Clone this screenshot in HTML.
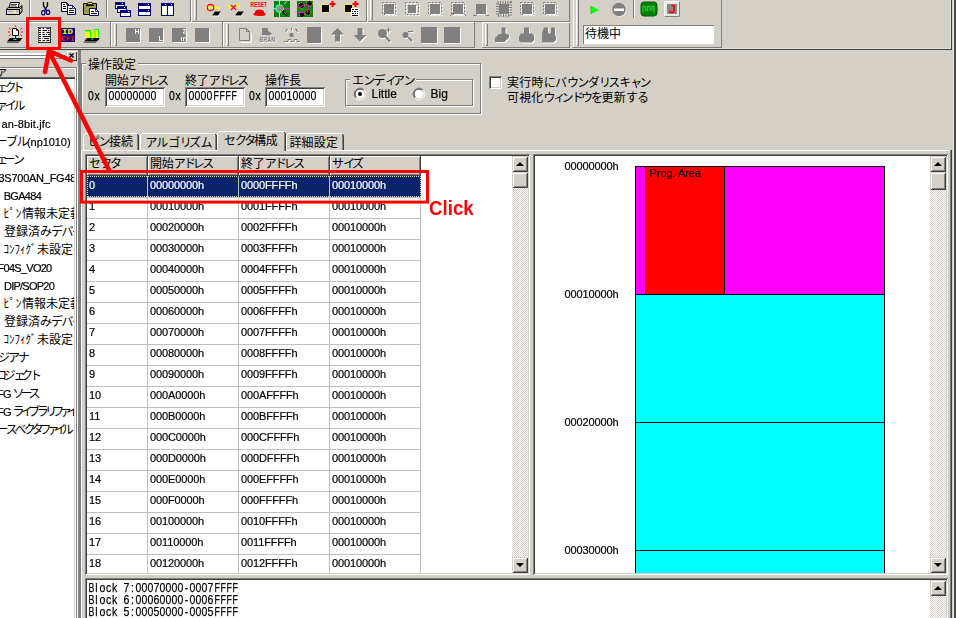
<!DOCTYPE html>
<html><head><meta charset="utf-8"><title>Sector configuration</title>
<style>
html,body{margin:0;padding:0}
body{width:956px;height:618px;overflow:hidden;background:#d4d0c8;position:relative;font-family:"Liberation Sans",sans-serif}
.a{position:absolute;box-sizing:border-box}
svg{position:absolute;left:0;top:0}
.t{line-height:1;white-space:pre;filter:grayscale(1);-webkit-text-stroke:0.2px}
.s{font-family:"Liberation Sans",sans-serif}
  .mo span{display:inline-block;width:6px;text-align:center}
.mo .w{transform:scaleX(.84)}
.m{font-family:"Liberation Mono",monospace}
.j{font-family:"Liberation Sans","Noto Sans CJK JP",sans-serif;font-size:12px;fill:#000}
</style></head><body>
<div class="a " style="left:0px;top:48px;width:951px;height:1px;background:#e4e1da;"></div>
<div class="a " style="left:950px;top:0px;width:1px;height:49px;background:#e4e1da;"></div>
<div class="a " style="left:0px;top:49px;width:952px;height:1px;background:#404040;"></div>
<div class="a " style="left:951px;top:0px;width:1px;height:50px;background:#404040;"></div>
<div class="a " style="left:953px;top:0px;width:1px;height:618px;background:#ebe8e1;"></div>
<div class="a " style="left:954px;top:0px;width:2px;height:618px;background:#4a4a4a;"></div>
<div class="a " style="left:0px;top:21px;width:570px;height:1px;background:#808080;"></div>
<div class="a " style="left:190px;top:0px;width:1px;height:22px;background:#808080;"></div>
<div class="a " style="left:191px;top:0px;width:1px;height:22px;background:#fff;"></div>
<div class="a " style="left:194px;top:0px;width:1px;height:20px;background:#fff;"></div>
<div class="a " style="left:196px;top:0px;width:1px;height:20px;background:#808080;"></div>
<div class="a " style="left:195px;top:19px;width:1px;height:1px;background:#808080;"></div>
<div class="a " style="left:366px;top:0px;width:1px;height:22px;background:#808080;"></div>
<div class="a " style="left:367px;top:0px;width:1px;height:22px;background:#fff;"></div>
<div class="a " style="left:370px;top:0px;width:1px;height:20px;background:#fff;"></div>
<div class="a " style="left:372px;top:0px;width:1px;height:20px;background:#808080;"></div>
<div class="a " style="left:371px;top:19px;width:1px;height:1px;background:#808080;"></div>
<div class="a " style="left:569px;top:0px;width:1px;height:48px;background:#808080;"></div>
<div class="a " style="left:29px;top:0px;width:1px;height:18px;background:#808080;"></div>
<div class="a " style="left:30px;top:0px;width:1px;height:18px;background:#fff;"></div>
<div class="a " style="left:106px;top:0px;width:1px;height:18px;background:#808080;"></div>
<div class="a " style="left:107px;top:0px;width:1px;height:18px;background:#fff;"></div>
<div class="a " style="left:0px;top:22px;width:570px;height:1px;background:#fff;"></div>
<div class="a " style="left:0px;top:47px;width:570px;height:1px;background:#808080;"></div>
<div class="a " style="left:110px;top:22px;width:1px;height:26px;background:#808080;"></div>
<div class="a " style="left:111px;top:23px;width:1px;height:24px;background:#fff;"></div>
<div class="a " style="left:114px;top:24px;width:1px;height:22px;background:#fff;"></div>
<div class="a " style="left:116px;top:24px;width:1px;height:22px;background:#808080;"></div>
<div class="a " style="left:115px;top:45px;width:1px;height:1px;background:#808080;"></div>
<div class="a " style="left:222px;top:22px;width:1px;height:26px;background:#808080;"></div>
<div class="a " style="left:223px;top:23px;width:1px;height:24px;background:#fff;"></div>
<div class="a " style="left:226px;top:24px;width:1px;height:22px;background:#fff;"></div>
<div class="a " style="left:228px;top:24px;width:1px;height:22px;background:#808080;"></div>
<div class="a " style="left:227px;top:45px;width:1px;height:1px;background:#808080;"></div>
<div class="a " style="left:474px;top:22px;width:1px;height:26px;background:#808080;"></div>
<div class="a " style="left:475px;top:22px;width:7px;height:26px;background:#d4d0c8;"></div>
<div class="a " style="left:475px;top:47px;width:7px;height:1px;background:#d4d0c8;"></div>
<div class="a " style="left:482px;top:22px;width:1px;height:25px;background:#fff;"></div>
<div class="a " style="left:485px;top:24px;width:1px;height:22px;background:#fff;"></div>
<div class="a " style="left:487px;top:24px;width:1px;height:22px;background:#808080;"></div>
<div class="a " style="left:486px;top:45px;width:1px;height:1px;background:#808080;"></div>
<div class="a " style="left:30px;top:26px;width:1px;height:18px;background:#fff;"></div>
<div class="a " style="left:570px;top:0px;width:3px;height:48px;background:#d4d0c8;"></div>
<div class="a " style="left:573px;top:0px;width:1px;height:48px;background:#fff;"></div>
<div class="a " style="left:576px;top:0px;width:1px;height:46px;background:#fff;"></div>
<div class="a " style="left:578px;top:0px;width:1px;height:46px;background:#808080;"></div>
<div class="a " style="left:577px;top:45px;width:1px;height:1px;background:#808080;"></div>
<div class="a " style="left:721px;top:0px;width:1px;height:48px;background:#808080;"></div>
<div class="a " style="left:573px;top:47px;width:149px;height:1px;background:#808080;"></div>
<div class="a " style="left:633px;top:0px;width:1px;height:18px;background:#808080;"></div>
<div class="a " style="left:634px;top:0px;width:1px;height:18px;background:#fff;"></div>
<div class="a " style="left:583px;top:25px;width:131px;height:19px;background:#fff;box-shadow:inset 1px 1px 0 #808080,inset -1px -1px 0 #fff;"></div>
<div class="a " style="left:0px;top:53px;width:65px;height:1px;background:#fff;"></div>
<div class="a " style="left:0px;top:54px;width:65px;height:1px;background:#fff;"></div>
<div class="a " style="left:0px;top:55px;width:65px;height:1px;background:#808080;"></div>
<div class="a " style="left:0px;top:56px;width:65px;height:1px;background:#fff;"></div>
<div class="a " style="left:0px;top:57px;width:65px;height:1px;background:#fff;"></div>
<div class="a " style="left:0px;top:58px;width:65px;height:1px;background:#808080;"></div>
<div class="a " style="left:67px;top:51px;width:10px;height:10px;background:#d4d0c8;box-shadow:inset 1px 1px 0 #fff,inset -1px -1px 0 #404040;"></div>
<div class="a " style="left:0px;top:67px;width:77px;height:1px;background:#808080;"></div>
<div class="a " style="left:0px;top:68px;width:76px;height:11px;background:#d4d0c8;"></div>
<div class="a " style="left:0px;top:68px;width:76px;height:1px;background:#fff;"></div>
<div class="a " style="left:0px;top:77px;width:75px;height:1px;background:#606060;"></div>
<div class="a " style="left:0px;top:78px;width:75px;height:1px;background:#404040;"></div>
<div class="a " style="left:0px;top:79px;width:74px;height:539px;background:#fff;"></div>
<div class="a " style="left:74px;top:79px;width:1px;height:539px;background:#d4d0c8;"></div>
<div class="a " style="left:75px;top:69px;width:1px;height:549px;background:#fff;"></div>
<div class="a " style="left:76px;top:67px;width:1px;height:551px;background:#808080;"></div>
<div class="a " style="left:77px;top:67px;width:1px;height:551px;background:#fff;"></div>
<div class="a " style="left:78px;top:50px;width:3px;height:568px;background:#808080;"></div>
<div class="a " style="left:81px;top:150px;width:1px;height:468px;background:#fff;"></div>
<div class="a" style="left:0;top:0;width:74px;height:618px;overflow:hidden"><div class="a t s" style="left:1.5px;top:119px;font-size:11px;color:#000;letter-spacing:0.119px;">an-8bit.jfc</div><div class="a t s" style="left:27px;top:137px;font-size:11px;color:#000;letter-spacing:-0.067px;">(np1010)</div><div class="a t s" style="left:-1.5px;top:173px;font-size:11px;color:#000;letter-spacing:-0.256px;">3S700AN_FG484</div><div class="a t s" style="left:3.7px;top:191px;font-size:11px;color:#000;letter-spacing:-0.681px;">BGA484</div><div class="a t s" style="left:-2.5px;top:263px;font-size:11px;color:#000;letter-spacing:-0.726px;">F04S_VO20</div><div class="a t s" style="left:4px;top:281px;font-size:11px;color:#000;letter-spacing:-0.762px;">DIP/SOP20</div><div class="a t s" style="left:-3px;top:389px;font-size:11px;color:#000;letter-spacing:-0.638px;">FG</div><div class="a t s" style="left:-3px;top:407px;font-size:11px;color:#000;letter-spacing:-0.638px;">FG</div></div>
<div class="a " style="left:82px;top:64px;width:400px;height:51px;border:1px solid #fff;box-sizing:border-box;"></div>
<div class="a " style="left:81px;top:63px;width:400px;height:51px;border:1px solid #808080;box-sizing:border-box;"></div>
<div class="a " style="left:86px;top:58px;width:52px;height:12px;background:#d4d0c8;"></div>
<div class="a " style="left:105px;top:87px;width:60px;height:20px;background:#fff;box-shadow:inset 1px 1px 0 #808080,inset -1px -1px 0 #fff,inset 2px 2px 0 #404040,inset -2px -2px 0 #d4d0c8;"></div>
<div class="a t s mo" style="left:108.5px;top:88.6px;font-size:10.5px;color:#000;transform:scaleY(1.25);transform-origin:0 0;"><span>0</span><span>0</span><span>0</span><span>0</span><span>0</span><span>0</span><span>0</span><span>0</span></div>
<div class="a " style="left:185px;top:87px;width:60px;height:20px;background:#fff;box-shadow:inset 1px 1px 0 #808080,inset -1px -1px 0 #fff,inset 2px 2px 0 #404040,inset -2px -2px 0 #d4d0c8;"></div>
<div class="a t s mo" style="left:188.5px;top:88.6px;font-size:10.5px;color:#000;transform:scaleY(1.25);transform-origin:0 0;"><span>0</span><span>0</span><span>0</span><span>0</span><span class="w">F</span><span class="w">F</span><span class="w">F</span><span class="w">F</span></div>
<div class="a " style="left:265px;top:87px;width:60px;height:20px;background:#fff;box-shadow:inset 1px 1px 0 #808080,inset -1px -1px 0 #fff,inset 2px 2px 0 #404040,inset -2px -2px 0 #d4d0c8;"></div>
<div class="a t s mo" style="left:268.5px;top:88.6px;font-size:10.5px;color:#000;transform:scaleY(1.25);transform-origin:0 0;"><span>0</span><span>0</span><span>0</span><span>1</span><span>0</span><span>0</span><span>0</span><span>0</span></div>
<div class="a t s mo" style="left:88px;top:88.6px;font-size:10.5px;color:#000;transform:scaleY(1.25);transform-origin:0 0;"><span>0</span><span>x</span></div>
<div class="a t s mo" style="left:169px;top:88.6px;font-size:10.5px;color:#000;transform:scaleY(1.25);transform-origin:0 0;"><span>0</span><span>x</span></div>
<div class="a t s mo" style="left:249px;top:88.6px;font-size:10.5px;color:#000;transform:scaleY(1.25);transform-origin:0 0;"><span>0</span><span>x</span></div>
<div class="a " style="left:346px;top:80px;width:128px;height:27px;border:1px solid #fff;box-sizing:border-box;"></div>
<div class="a " style="left:345px;top:79px;width:128px;height:27px;border:1px solid #808080;box-sizing:border-box;"></div>
<div class="a " style="left:350px;top:74px;width:66px;height:12px;background:#d4d0c8;"></div>
<div class="a t s" style="left:371.5px;top:87.5px;font-size:12px;color:#000;">Little</div>
<div class="a t s" style="left:430.5px;top:87.5px;font-size:12px;color:#000;">Big</div>
<div class="a " style="left:489px;top:76px;width:13px;height:13px;background:#fff;box-shadow:inset 1px 1px 0 #808080,inset -1px -1px 0 #fff,inset 2px 2px 0 #404040,inset -2px -2px 0 #d4d0c8;"></div>
<div class="a " style="left:81px;top:150px;width:870px;height:1px;background:#fff;"></div>
<div class="a " style="left:950px;top:150px;width:1px;height:468px;background:#808080;"></div>
<div class="a " style="left:951px;top:150px;width:1px;height:468px;background:#404040;"></div>
<div class="a " style="left:83px;top:135px;width:1px;height:15px;background:#fff;"></div>
<div class="a " style="left:85px;top:133px;width:52px;height:1px;background:#fff;"></div>
<div class="a " style="left:84px;top:134px;width:1px;height:1px;background:#fff;"></div>
<div class="a " style="left:138px;top:135px;width:1px;height:15px;background:#404040;"></div>
<div class="a " style="left:137px;top:134px;width:1px;height:16px;background:#808080;"></div>
<div class="a " style="left:137px;top:134px;width:1px;height:1px;background:#404040;"></div>
<div class="a " style="left:140px;top:135px;width:1px;height:15px;background:#fff;"></div>
<div class="a " style="left:142px;top:133px;width:73px;height:1px;background:#fff;"></div>
<div class="a " style="left:141px;top:134px;width:1px;height:1px;background:#fff;"></div>
<div class="a " style="left:216px;top:135px;width:1px;height:15px;background:#404040;"></div>
<div class="a " style="left:215px;top:134px;width:1px;height:16px;background:#808080;"></div>
<div class="a " style="left:215px;top:134px;width:1px;height:1px;background:#404040;"></div>
<div class="a " style="left:286px;top:135px;width:1px;height:15px;background:#fff;"></div>
<div class="a " style="left:288px;top:133px;width:54px;height:1px;background:#fff;"></div>
<div class="a " style="left:287px;top:134px;width:1px;height:1px;background:#fff;"></div>
<div class="a " style="left:343px;top:135px;width:1px;height:15px;background:#404040;"></div>
<div class="a " style="left:342px;top:134px;width:1px;height:16px;background:#808080;"></div>
<div class="a " style="left:342px;top:134px;width:1px;height:1px;background:#404040;"></div>
<div class="a " style="left:217px;top:131px;width:69px;height:20px;background:#d4d0c8;"></div>
<div class="a " style="left:217px;top:133px;width:1px;height:18px;background:#fff;"></div>
<div class="a " style="left:219px;top:131px;width:65px;height:1px;background:#fff;"></div>
<div class="a " style="left:218px;top:132px;width:1px;height:1px;background:#fff;"></div>
<div class="a " style="left:285px;top:133px;width:1px;height:18px;background:#404040;"></div>
<div class="a " style="left:284px;top:132px;width:1px;height:19px;background:#808080;"></div>
<div class="a " style="left:284px;top:132px;width:1px;height:1px;background:#404040;"></div>
<div class="a " style="left:85px;top:154px;width:445px;height:421px;background:#fff;box-shadow:inset 1px 1px 0 #808080,inset -1px -1px 0 #fff,inset 2px 2px 0 #404040,inset -2px -2px 0 #d4d0c8;"></div>
<div class="a " style="left:87px;top:156px;width:334px;height:20px;background:#d4d0c8;"></div>
<div class="a " style="left:87px;top:156px;width:334px;height:1px;background:#fff;"></div>
<div class="a " style="left:87px;top:174px;width:334px;height:1px;background:#808080;"></div>
<div class="a " style="left:87px;top:175px;width:334px;height:1px;background:#404040;"></div>
<div class="a " style="left:87px;top:156px;width:1px;height:19px;background:#fff;"></div>
<div class="a " style="left:147px;top:156px;width:1px;height:20px;background:#404040;"></div>
<div class="a " style="left:146px;top:157px;width:1px;height:18px;background:#808080;"></div>
<div class="a " style="left:148px;top:156px;width:1px;height:19px;background:#fff;"></div>
<div class="a " style="left:238px;top:156px;width:1px;height:20px;background:#404040;"></div>
<div class="a " style="left:237px;top:157px;width:1px;height:18px;background:#808080;"></div>
<div class="a " style="left:239px;top:156px;width:1px;height:19px;background:#fff;"></div>
<div class="a " style="left:329px;top:156px;width:1px;height:20px;background:#404040;"></div>
<div class="a " style="left:328px;top:157px;width:1px;height:18px;background:#808080;"></div>
<div class="a " style="left:330px;top:156px;width:1px;height:19px;background:#fff;"></div>
<div class="a " style="left:420px;top:156px;width:1px;height:20px;background:#404040;"></div>
<div class="a " style="left:419px;top:157px;width:1px;height:18px;background:#808080;"></div>
<div class="a " style="left:87px;top:176px;width:334px;height:21px;background:#0a246a;outline:1px dotted #e8d8a0;outline-offset:-1px;"></div>
<div class="a " style="left:87px;top:197px;width:334px;height:1px;background:#c0c0c0;"></div>
<div class="a t s" style="left:89px;top:180px;font-size:11px;color:#fff;letter-spacing:-0.12px;">0</div>
<div class="a t s" style="left:150px;top:180px;font-size:11px;color:#fff;letter-spacing:-0.12px;">00000000h</div>
<div class="a t s" style="left:241px;top:180px;font-size:11px;color:#fff;letter-spacing:-0.12px;">0000FFFFh</div>
<div class="a t s" style="left:332px;top:180px;font-size:11px;color:#fff;letter-spacing:-0.12px;">00010000h</div>
<div class="a " style="left:87px;top:218px;width:334px;height:1px;background:#c0c0c0;"></div>
<div class="a t s" style="left:89px;top:201px;font-size:11px;color:#000;letter-spacing:-0.12px;">1</div>
<div class="a t s" style="left:150px;top:201px;font-size:11px;color:#000;letter-spacing:-0.12px;">00010000h</div>
<div class="a t s" style="left:241px;top:201px;font-size:11px;color:#000;letter-spacing:-0.12px;">0001FFFFh</div>
<div class="a t s" style="left:332px;top:201px;font-size:11px;color:#000;letter-spacing:-0.12px;">00010000h</div>
<div class="a " style="left:87px;top:239px;width:334px;height:1px;background:#c0c0c0;"></div>
<div class="a t s" style="left:89px;top:222px;font-size:11px;color:#000;letter-spacing:-0.12px;">2</div>
<div class="a t s" style="left:150px;top:222px;font-size:11px;color:#000;letter-spacing:-0.12px;">00020000h</div>
<div class="a t s" style="left:241px;top:222px;font-size:11px;color:#000;letter-spacing:-0.12px;">0002FFFFh</div>
<div class="a t s" style="left:332px;top:222px;font-size:11px;color:#000;letter-spacing:-0.12px;">00010000h</div>
<div class="a " style="left:87px;top:260px;width:334px;height:1px;background:#c0c0c0;"></div>
<div class="a t s" style="left:89px;top:243px;font-size:11px;color:#000;letter-spacing:-0.12px;">3</div>
<div class="a t s" style="left:150px;top:243px;font-size:11px;color:#000;letter-spacing:-0.12px;">00030000h</div>
<div class="a t s" style="left:241px;top:243px;font-size:11px;color:#000;letter-spacing:-0.12px;">0003FFFFh</div>
<div class="a t s" style="left:332px;top:243px;font-size:11px;color:#000;letter-spacing:-0.12px;">00010000h</div>
<div class="a " style="left:87px;top:281px;width:334px;height:1px;background:#c0c0c0;"></div>
<div class="a t s" style="left:89px;top:264px;font-size:11px;color:#000;letter-spacing:-0.12px;">4</div>
<div class="a t s" style="left:150px;top:264px;font-size:11px;color:#000;letter-spacing:-0.12px;">00040000h</div>
<div class="a t s" style="left:241px;top:264px;font-size:11px;color:#000;letter-spacing:-0.12px;">0004FFFFh</div>
<div class="a t s" style="left:332px;top:264px;font-size:11px;color:#000;letter-spacing:-0.12px;">00010000h</div>
<div class="a " style="left:87px;top:302px;width:334px;height:1px;background:#c0c0c0;"></div>
<div class="a t s" style="left:89px;top:285px;font-size:11px;color:#000;letter-spacing:-0.12px;">5</div>
<div class="a t s" style="left:150px;top:285px;font-size:11px;color:#000;letter-spacing:-0.12px;">00050000h</div>
<div class="a t s" style="left:241px;top:285px;font-size:11px;color:#000;letter-spacing:-0.12px;">0005FFFFh</div>
<div class="a t s" style="left:332px;top:285px;font-size:11px;color:#000;letter-spacing:-0.12px;">00010000h</div>
<div class="a " style="left:87px;top:323px;width:334px;height:1px;background:#c0c0c0;"></div>
<div class="a t s" style="left:89px;top:306px;font-size:11px;color:#000;letter-spacing:-0.12px;">6</div>
<div class="a t s" style="left:150px;top:306px;font-size:11px;color:#000;letter-spacing:-0.12px;">00060000h</div>
<div class="a t s" style="left:241px;top:306px;font-size:11px;color:#000;letter-spacing:-0.12px;">0006FFFFh</div>
<div class="a t s" style="left:332px;top:306px;font-size:11px;color:#000;letter-spacing:-0.12px;">00010000h</div>
<div class="a " style="left:87px;top:344px;width:334px;height:1px;background:#c0c0c0;"></div>
<div class="a t s" style="left:89px;top:327px;font-size:11px;color:#000;letter-spacing:-0.12px;">7</div>
<div class="a t s" style="left:150px;top:327px;font-size:11px;color:#000;letter-spacing:-0.12px;">00070000h</div>
<div class="a t s" style="left:241px;top:327px;font-size:11px;color:#000;letter-spacing:-0.12px;">0007FFFFh</div>
<div class="a t s" style="left:332px;top:327px;font-size:11px;color:#000;letter-spacing:-0.12px;">00010000h</div>
<div class="a " style="left:87px;top:365px;width:334px;height:1px;background:#c0c0c0;"></div>
<div class="a t s" style="left:89px;top:348px;font-size:11px;color:#000;letter-spacing:-0.12px;">8</div>
<div class="a t s" style="left:150px;top:348px;font-size:11px;color:#000;letter-spacing:-0.12px;">00080000h</div>
<div class="a t s" style="left:241px;top:348px;font-size:11px;color:#000;letter-spacing:-0.12px;">0008FFFFh</div>
<div class="a t s" style="left:332px;top:348px;font-size:11px;color:#000;letter-spacing:-0.12px;">00010000h</div>
<div class="a " style="left:87px;top:386px;width:334px;height:1px;background:#c0c0c0;"></div>
<div class="a t s" style="left:89px;top:369px;font-size:11px;color:#000;letter-spacing:-0.12px;">9</div>
<div class="a t s" style="left:150px;top:369px;font-size:11px;color:#000;letter-spacing:-0.12px;">00090000h</div>
<div class="a t s" style="left:241px;top:369px;font-size:11px;color:#000;letter-spacing:-0.12px;">0009FFFFh</div>
<div class="a t s" style="left:332px;top:369px;font-size:11px;color:#000;letter-spacing:-0.12px;">00010000h</div>
<div class="a " style="left:87px;top:407px;width:334px;height:1px;background:#c0c0c0;"></div>
<div class="a t s" style="left:89px;top:390px;font-size:11px;color:#000;letter-spacing:-0.12px;">10</div>
<div class="a t s" style="left:150px;top:390px;font-size:11px;color:#000;letter-spacing:-0.12px;">000A0000h</div>
<div class="a t s" style="left:241px;top:390px;font-size:11px;color:#000;letter-spacing:-0.12px;">000AFFFFh</div>
<div class="a t s" style="left:332px;top:390px;font-size:11px;color:#000;letter-spacing:-0.12px;">00010000h</div>
<div class="a " style="left:87px;top:428px;width:334px;height:1px;background:#c0c0c0;"></div>
<div class="a t s" style="left:89px;top:411px;font-size:11px;color:#000;letter-spacing:-0.12px;">11</div>
<div class="a t s" style="left:150px;top:411px;font-size:11px;color:#000;letter-spacing:-0.12px;">000B0000h</div>
<div class="a t s" style="left:241px;top:411px;font-size:11px;color:#000;letter-spacing:-0.12px;">000BFFFFh</div>
<div class="a t s" style="left:332px;top:411px;font-size:11px;color:#000;letter-spacing:-0.12px;">00010000h</div>
<div class="a " style="left:87px;top:449px;width:334px;height:1px;background:#c0c0c0;"></div>
<div class="a t s" style="left:89px;top:432px;font-size:11px;color:#000;letter-spacing:-0.12px;">12</div>
<div class="a t s" style="left:150px;top:432px;font-size:11px;color:#000;letter-spacing:-0.12px;">000C0000h</div>
<div class="a t s" style="left:241px;top:432px;font-size:11px;color:#000;letter-spacing:-0.12px;">000CFFFFh</div>
<div class="a t s" style="left:332px;top:432px;font-size:11px;color:#000;letter-spacing:-0.12px;">00010000h</div>
<div class="a " style="left:87px;top:470px;width:334px;height:1px;background:#c0c0c0;"></div>
<div class="a t s" style="left:89px;top:453px;font-size:11px;color:#000;letter-spacing:-0.12px;">13</div>
<div class="a t s" style="left:150px;top:453px;font-size:11px;color:#000;letter-spacing:-0.12px;">000D0000h</div>
<div class="a t s" style="left:241px;top:453px;font-size:11px;color:#000;letter-spacing:-0.12px;">000DFFFFh</div>
<div class="a t s" style="left:332px;top:453px;font-size:11px;color:#000;letter-spacing:-0.12px;">00010000h</div>
<div class="a " style="left:87px;top:491px;width:334px;height:1px;background:#c0c0c0;"></div>
<div class="a t s" style="left:89px;top:474px;font-size:11px;color:#000;letter-spacing:-0.12px;">14</div>
<div class="a t s" style="left:150px;top:474px;font-size:11px;color:#000;letter-spacing:-0.12px;">000E0000h</div>
<div class="a t s" style="left:241px;top:474px;font-size:11px;color:#000;letter-spacing:-0.12px;">000EFFFFh</div>
<div class="a t s" style="left:332px;top:474px;font-size:11px;color:#000;letter-spacing:-0.12px;">00010000h</div>
<div class="a " style="left:87px;top:512px;width:334px;height:1px;background:#c0c0c0;"></div>
<div class="a t s" style="left:89px;top:495px;font-size:11px;color:#000;letter-spacing:-0.12px;">15</div>
<div class="a t s" style="left:150px;top:495px;font-size:11px;color:#000;letter-spacing:-0.12px;">000F0000h</div>
<div class="a t s" style="left:241px;top:495px;font-size:11px;color:#000;letter-spacing:-0.12px;">000FFFFFh</div>
<div class="a t s" style="left:332px;top:495px;font-size:11px;color:#000;letter-spacing:-0.12px;">00010000h</div>
<div class="a " style="left:87px;top:533px;width:334px;height:1px;background:#c0c0c0;"></div>
<div class="a t s" style="left:89px;top:516px;font-size:11px;color:#000;letter-spacing:-0.12px;">16</div>
<div class="a t s" style="left:150px;top:516px;font-size:11px;color:#000;letter-spacing:-0.12px;">00100000h</div>
<div class="a t s" style="left:241px;top:516px;font-size:11px;color:#000;letter-spacing:-0.12px;">0010FFFFh</div>
<div class="a t s" style="left:332px;top:516px;font-size:11px;color:#000;letter-spacing:-0.12px;">00010000h</div>
<div class="a " style="left:87px;top:554px;width:334px;height:1px;background:#c0c0c0;"></div>
<div class="a t s" style="left:89px;top:537px;font-size:11px;color:#000;letter-spacing:-0.12px;">17</div>
<div class="a t s" style="left:150px;top:537px;font-size:11px;color:#000;letter-spacing:-0.12px;">00110000h</div>
<div class="a t s" style="left:241px;top:537px;font-size:11px;color:#000;letter-spacing:-0.12px;">0011FFFFh</div>
<div class="a t s" style="left:332px;top:537px;font-size:11px;color:#000;letter-spacing:-0.12px;">00010000h</div>
<div class="a t s" style="left:89px;top:558px;font-size:11px;color:#000;letter-spacing:-0.12px;">18</div>
<div class="a t s" style="left:150px;top:558px;font-size:11px;color:#000;letter-spacing:-0.12px;">00120000h</div>
<div class="a t s" style="left:241px;top:558px;font-size:11px;color:#000;letter-spacing:-0.12px;">0012FFFFh</div>
<div class="a t s" style="left:332px;top:558px;font-size:11px;color:#000;letter-spacing:-0.12px;">00010000h</div>
<div class="a " style="left:147px;top:176px;width:1px;height:397px;background:#c0c0c0;"></div>
<div class="a " style="left:238px;top:176px;width:1px;height:397px;background:#c0c0c0;"></div>
<div class="a " style="left:329px;top:176px;width:1px;height:397px;background:#c0c0c0;"></div>
<div class="a " style="left:420px;top:197px;width:1px;height:376px;background:#c0c0c0;"></div>
<div class="a " style="left:512px;top:156px;width:16px;height:417px;background-image:conic-gradient(#fff 25%,#d4d0c8 0 50%,#fff 0 75%,#d4d0c8 0);background-size:2px 2px;"></div>
<div class="a " style="left:512px;top:156px;width:16px;height:16px;background:#d4d0c8;box-shadow:inset 1px 1px 0 #d4d0c8,inset -1px -1px 0 #404040,inset 2px 2px 0 #fff,inset -2px -2px 0 #808080;"></div>
<div class="a " style="left:512px;top:557px;width:16px;height:16px;background:#d4d0c8;box-shadow:inset 1px 1px 0 #d4d0c8,inset -1px -1px 0 #404040,inset 2px 2px 0 #fff,inset -2px -2px 0 #808080;"></div>
<div class="a " style="left:512px;top:172px;width:16px;height:16px;background:#d4d0c8;box-shadow:inset 1px 1px 0 #d4d0c8,inset -1px -1px 0 #404040,inset 2px 2px 0 #fff,inset -2px -2px 0 #808080;"></div>
<div class="a " style="left:533px;top:154px;width:415px;height:421px;background:#fff;box-shadow:inset 1px 1px 0 #808080,inset -1px -1px 0 #fff,inset 2px 2px 0 #404040,inset -2px -2px 0 #d4d0c8;"></div>
<div class="a " style="left:930px;top:156px;width:16px;height:417px;background-image:conic-gradient(#fff 25%,#d4d0c8 0 50%,#fff 0 75%,#d4d0c8 0);background-size:2px 2px;"></div>
<div class="a " style="left:930px;top:156px;width:16px;height:16px;background:#d4d0c8;box-shadow:inset 1px 1px 0 #d4d0c8,inset -1px -1px 0 #404040,inset 2px 2px 0 #fff,inset -2px -2px 0 #808080;"></div>
<div class="a " style="left:930px;top:557px;width:16px;height:16px;background:#d4d0c8;box-shadow:inset 1px 1px 0 #d4d0c8,inset -1px -1px 0 #404040,inset 2px 2px 0 #fff,inset -2px -2px 0 #808080;"></div>
<div class="a " style="left:930px;top:172px;width:16px;height:18px;background:#d4d0c8;box-shadow:inset 1px 1px 0 #d4d0c8,inset -1px -1px 0 #404040,inset 2px 2px 0 #fff,inset -2px -2px 0 #808080;"></div>
<div class="a " style="left:635px;top:166px;width:250px;height:407px;background:#000;"></div>
<div class="a " style="left:636px;top:167px;width:248px;height:127px;background:#f0f;"></div>
<div class="a " style="left:645px;top:167px;width:80px;height:127px;background:#000;"></div>
<div class="a " style="left:646px;top:167px;width:78px;height:127px;background:#f00;"></div>
<div class="a " style="left:636px;top:295px;width:248px;height:127px;background:#0ff;"></div>
<div class="a " style="left:636px;top:423px;width:248px;height:127px;background:#0ff;"></div>
<div class="a " style="left:636px;top:551px;width:248px;height:22px;background:#0ff;"></div>
<div class="a t s" style="left:564.5px;top:160.5px;font-size:11px;color:#000;letter-spacing:-0.12px;">00000000h</div>
<div class="a t s" style="left:564.5px;top:288.5px;font-size:11px;color:#000;letter-spacing:-0.12px;">00010000h</div>
<div class="a t s" style="left:564.5px;top:416.5px;font-size:11px;color:#000;letter-spacing:-0.12px;">00020000h</div>
<div class="a t s" style="left:564.5px;top:544.5px;font-size:11px;color:#000;letter-spacing:-0.12px;">00030000h</div>
<div class="a t s" style="left:649.5px;top:168px;font-size:11px;color:#000;letter-spacing:-0.05px;">Prog. Area</div>
<div class="a " style="left:85px;top:578px;width:863px;height:44px;background:#fff;box-shadow:inset 1px 1px 0 #808080,inset -1px -1px 0 #fff,inset 2px 2px 0 #404040,inset -2px -2px 0 #d4d0c8;"></div>
<div class="a " style="left:930px;top:580px;width:16px;height:61px;background-image:conic-gradient(#fff 25%,#d4d0c8 0 50%,#fff 0 75%,#d4d0c8 0);background-size:2px 2px;"></div>
<div class="a " style="left:930px;top:580px;width:16px;height:16px;background:#d4d0c8;box-shadow:inset 1px 1px 0 #d4d0c8,inset -1px -1px 0 #404040,inset 2px 2px 0 #fff,inset -2px -2px 0 #808080;"></div>
<div class="a " style="left:930px;top:625px;width:16px;height:16px;background:#d4d0c8;box-shadow:inset 1px 1px 0 #d4d0c8,inset -1px -1px 0 #404040,inset 2px 2px 0 #fff,inset -2px -2px 0 #808080;"></div>
<div class="a t s mo" style="left:87.5px;top:580.6px;font-size:10.5px;color:#000;transform:scaleY(1.25);transform-origin:0 0;"><span class="w">B</span><span>l</span><span>o</span><span>c</span><span>k</span><span>&nbsp;</span><span>7</span><span>:</span><span>0</span><span>0</span><span>0</span><span>7</span><span>0</span><span>0</span><span>0</span><span>0</span><span>-</span><span>0</span><span>0</span><span>0</span><span>7</span><span class="w">F</span><span class="w">F</span><span class="w">F</span><span class="w">F</span></div>
<div class="a t s mo" style="left:87.5px;top:592.6px;font-size:10.5px;color:#000;transform:scaleY(1.25);transform-origin:0 0;"><span class="w">B</span><span>l</span><span>o</span><span>c</span><span>k</span><span>&nbsp;</span><span>6</span><span>:</span><span>0</span><span>0</span><span>0</span><span>6</span><span>0</span><span>0</span><span>0</span><span>0</span><span>-</span><span>0</span><span>0</span><span>0</span><span>6</span><span class="w">F</span><span class="w">F</span><span class="w">F</span><span class="w">F</span></div>
<div class="a t s mo" style="left:87.5px;top:604.6px;font-size:10.5px;color:#000;transform:scaleY(1.25);transform-origin:0 0;"><span class="w">B</span><span>l</span><span>o</span><span>c</span><span>k</span><span>&nbsp;</span><span>5</span><span>:</span><span>0</span><span>0</span><span>0</span><span>5</span><span>0</span><span>0</span><span>0</span><span>0</span><span>-</span><span>0</span><span>0</span><span>0</span><span>5</span><span class="w">F</span><span class="w">F</span><span class="w">F</span><span class="w">F</span></div>
<svg width="956" height="618" viewBox="0 0 956 618"><defs><clipPath id="cl"><rect x="0" y="60" width="74" height="558"/></clipPath></defs>
<text class="j" x="585 597 609" y="38">待機中</text>
<path d="M69.5 53.5l4 4m0-4l-4 4" stroke="#000" stroke-width="1.3" fill="none"/>
<g clip-path="url(#cl)">
<text class="j" x="-4" y="75.5">ァ</text>
<text class="j" x="-4 4.5 12.5" y="92.3">ェクト</text>
<text class="j" x="-4 5 13.5" y="110.3">ァイル</text>
<text class="j" x="-4.5 6 16.5" y="146.3">ーブル</text>
<text class="j" x="-4 3.5 13" y="164.3">ェーン</text>
<text class="j" x="3.5" y="218.3" textLength="18" lengthAdjust="spacingAndGlyphs">ﾋﾟﾝ</text>
<text class="j" x="22 34 46 58 70" y="218.3">情報未定義</text>
<text class="j" x="4 16 28 40 51 61.5 72" y="236.3">登録済みデバイ</text>
<text class="j" x="3.5" y="254.3" textLength="33" lengthAdjust="spacingAndGlyphs">ｺﾝﾌｨｸﾞ</text>
<text class="j" x="37 49 61" y="254.3">未設定</text>
<text class="j" x="3.5" y="308.3" textLength="18" lengthAdjust="spacingAndGlyphs">ﾋﾟﾝ</text>
<text class="j" x="22 34 46 58 70" y="308.3">情報未定義</text>
<text class="j" x="4 16 28 40 51 61.5 72" y="326.3">登録済みデバイ</text>
<text class="j" x="3.5" y="344.3" textLength="33" lengthAdjust="spacingAndGlyphs">ｺﾝﾌｨｸﾞ</text>
<text class="j" x="37 49 61" y="344.3">未設定</text>
<text class="j" x="-2 8 18" y="362.3">ジアナ</text>
<text class="j" x="-5 3.5 13.5 21 30" y="380.3">ロジェクト</text>
<text class="j" x="12.5 20.5 28.5" y="398.3">ソース</text>
<text class="j" x="12.5 20.76 28.14 36.8 45.06 52.34 60.12 67.12" y="416.3">ライブラリファイ</text>
<text class="j" x="-3.5 5.67 14.45 23.81 31.61 39.61 47.41 54.43 61.84" y="434.3">ースベクタファイル</text>
</g>
<text class="j" x="88 100 112 124" y="68.5">操作設定</text>
<text class="j" x="105 116.82 128.64 138.92 147.79 157.36" y="84.5">開始アドレス</text>
<text class="j" x="185 196.82 208.64 218.92 227.79 237.36" y="84.5">終了アドレス</text>
<text class="j" x="265 277 289" y="84.5">操作長</text>
<text class="j" x="352 363.16 373.59 385.12 393.01 403.57" y="84.5">エンディアン</text>
<g transform="translate(354,88)"><circle cx="6" cy="6" r="5" fill="#fff"/><path d="M1.8 10.2A5.5 5.5 0 0 1 10.2 1.8" stroke="#808080" fill="none"/><path d="M2.5 9.5A4.5 4.5 0 0 1 9.5 2.5" stroke="#404040" fill="none"/><path d="M1.8 10.2A5.5 5.5 0 0 0 10.2 1.8" stroke="#fff" fill="none"/><path d="M2.5 9.5A4.5 4.5 0 0 0 9.5 2.5" stroke="#d4d0c8" fill="none"/><circle cx="6" cy="6" r="2" fill="#000"/></g>
<g transform="translate(413,88)"><circle cx="6" cy="6" r="5" fill="#fff"/><path d="M1.8 10.2A5.5 5.5 0 0 1 10.2 1.8" stroke="#808080" fill="none"/><path d="M2.5 9.5A4.5 4.5 0 0 1 9.5 2.5" stroke="#404040" fill="none"/><path d="M1.8 10.2A5.5 5.5 0 0 0 10.2 1.8" stroke="#fff" fill="none"/><path d="M2.5 9.5A4.5 4.5 0 0 0 9.5 2.5" stroke="#d4d0c8" fill="none"/></g>
<text class="j" x="507 519.29 531.57 543.86 555.04 567.08 577.15 587.71 599.02 608.23 619.29 630.22 639.44" y="86.5">実行時にバウンダリスキャン</text>
<text class="j" x="507 519.19 531.37 543.56 553.55 561.46 571.94 581.08 591.07 601.55 613.73 625.92 636.89" y="101.5">可視化ウィンドウを更新する</text>
<text class="j" x="88 98.59 108.93 120.97" y="146">ピン接続</text>
<text class="j" x="145.5 156.17 168.32 179.73 188.93 200.46" y="146.5">アルゴリズム</text>
<text class="j" x="224 234.94 244.34 253.98 265.74" y="144.5">セクタ構成</text>
<text class="j" x="289.5 301.62 313.75 325.88" y="146.5">詳細設定</text>
<text class="j" x="89 100.31 110.03" y="168">セクタ</text>
<text class="j" x="150 161.82 173.64 183.92 192.79 202.36" y="168">開始アドレス</text>
<text class="j" x="241 252.82 264.64 274.92 283.79 293.36" y="168">終了アドレス</text>
<text class="j" x="332 343.19 352.04" y="168">サイズ</text>
<path d="M516 166l4 -4l4 4z" fill="#000"/>
<path d="M516 563l4 4l4 -4z" fill="#000"/>
<path d="M934 166l4 -4l4 4z" fill="#000"/>
<path d="M934 563l4 4l4 -4z" fill="#000"/>
<path d="M934 590l4 -4l4 4z" fill="#000"/>
<path d="M934 631l4 4l4 -4z" fill="#000"/>
<g><path d="M10.5 2.5h9l-1.5 5h-9z" fill="#fff" stroke="#000" stroke-width="1" /><path d="M11 4.5h6M10.5 6h6" fill="none" stroke="#000" stroke-width="0.8" /><path d="M8.5 7.5h11l2.5 -2v6l-2.5 3h-11l-2 -1.5v-4z" fill="#c0c0c0" stroke="#000" stroke-width="1" /><path d="M6.5 9.5h13v5h-13z" fill="#d8d8d8" stroke="#000" stroke-width="1" /><rect x="13" y="11" width="3" height="1.2" fill="#ff0"/><rect x="7.5" y="11" width="11" height="1" fill="#a0a0a0"/><rect x="13" y="11" width="3" height="1" fill="#ff0"/><path d="M19.5 9.5l2.5 -2.5M19.5 14.5l2.5 -3" fill="none" stroke="#000" stroke-width="0.8" /><path d="M43.5 2v3.5l2 3.5l2 -3.5v-3.5" fill="none" stroke="#000" stroke-width="1.3" /><path d="M45.5 9l-1 2M45.5 9l1 2" fill="none" stroke="#000080" stroke-width="1.2" /><ellipse cx="43.3" cy="12.8" rx="1.7" ry="2.2" fill="none" stroke="#000080" stroke-width="1.2"/><ellipse cx="48" cy="12.3" rx="1.7" ry="2.2" fill="none" stroke="#000080" stroke-width="1.2"/><path d="M61.5 2.5h5l2 2v7h-7z" fill="#fff" stroke="#000" stroke-width="1" /><path d="M66.5 2.5v2h2" fill="none" stroke="#000" stroke-width="0.8" /><path d="M63 4.5h2M63 6.5h3M63 8.5h3" fill="none" stroke="#000" stroke-width="1" /><path d="M67.5 5.5h5l3 3v6h-8z" fill="#fff" stroke="#000080" stroke-width="1" /><path d="M72.5 5.5v3h3" fill="none" stroke="#000080" stroke-width="0.8" /><path d="M69 8.5h3M69 10.5h5M69 12.5h5" fill="none" stroke="#000" stroke-width="1" /><path d="M83.5 3.5h13v11h-13z" fill="#9a9a50" stroke="#000" stroke-width="1" /><path d="M87 4.5h6l-1 -2h-4z" fill="#ff0" stroke="#000" stroke-width="0.8" /><path d="M86 5.5h8" fill="none" stroke="#000" stroke-width="1.2" /><path d="M89.5 8.5h6l3 3v4h-9z" fill="#fff" stroke="#000080" stroke-width="1" /><path d="M95.5 8.5v3h3" fill="none" stroke="#000080" stroke-width="0.8" /><path d="M91 11.5h3M91 13.5h6" fill="none" stroke="#000" stroke-width="1" /><rect x="115" y="2" width="10" height="7" fill="#000080"/><rect x="116" y="5" width="8" height="3" fill="#fff"/><rect x="122" y="3" width="1" height="1" fill="#fff"/><rect x="117" y="6" width="10" height="7" fill="#000080"/><rect x="118" y="9" width="8" height="3" fill="#fff"/><rect x="124" y="7" width="1" height="1" fill="#fff"/><rect x="120" y="10" width="11" height="7" fill="#000080"/><rect x="121" y="13" width="9" height="3" fill="#fff"/><rect x="128" y="11" width="1" height="1" fill="#fff"/><rect x="138" y="3" width="13" height="7" fill="#000080"/><rect x="139" y="6" width="11" height="3" fill="#fff"/><rect x="148" y="4" width="1" height="1" fill="#fff"/><rect x="138" y="9" width="13" height="7" fill="#000080"/><rect x="139" y="12" width="11" height="3" fill="#fff"/><rect x="148" y="10" width="1" height="1" fill="#fff"/><rect x="161" y="3" width="7" height="13" fill="#000080"/><rect x="162" y="6" width="5" height="9" fill="#fff"/><rect x="165" y="4" width="1" height="1" fill="#fff"/><rect x="167" y="3" width="7" height="13" fill="#000080"/><rect x="168" y="6" width="5" height="9" fill="#fff"/><rect x="171" y="4" width="1" height="1" fill="#fff"/><path d="M205 7.5h13.5v3.5" fill="none" stroke="#ff0" stroke-width="1.3" /><circle cx="210.5" cy="7.5" r="3.2" fill="none" stroke="#f00" stroke-width="1.2"/><path d="M215 11.5h6l-3 4h-6z" fill="#000" /><path d="M211.5 16.1h7" fill="none" stroke="#fff" stroke-width="1" stroke-dasharray="1 1"/><path d="M221.4 11.5l-3 4" fill="none" stroke="#fff" stroke-width="1" stroke-dasharray="1 1"/><path d="M228 5l2 1l-1.5 1l2 1M238 3l-1.5 2l3 0.5l0 3.5" fill="none" stroke="#ff0" stroke-width="1.2" /><path d="M231 5l5 5M236 5l-5 5" fill="none" stroke="#f00" stroke-width="1.2" /><path d="M238 11.5h6l-3 4h-6z" fill="#000" /><path d="M234.5 16.1h7" fill="none" stroke="#fff" stroke-width="1" stroke-dasharray="1 1"/><path d="M244.4 11.5l-3 4" fill="none" stroke="#fff" stroke-width="1" stroke-dasharray="1 1"/><text x="250.6" y="7" font-family="Liberation Sans,sans-serif" font-weight="bold" font-size="8" fill="#f00" textLength="16.5" lengthAdjust="spacingAndGlyphs">RESET</text><path d="M255 12q0 -2.5 4.5 -2.5q4.5 0 4.5 2.5v1h1.5v1.5q0 1.5 -6 1.5q-6 0 -6 -1.5v-1.5h1.5z" fill="#f00" /><path d="M255 13h9" fill="none" stroke="#b00000" stroke-width="0.8" /><rect x="274" y="1" width="16" height="16" fill="#008000"/><path d="M279.5 1v16M274 8.5h16M284 4l3 -2.5" fill="none" stroke="#fff" stroke-width="0.8" /><path d="M283 8.5h7" fill="none" stroke="#f0f" stroke-width="1" /><circle cx="279.5" cy="8.5" r="4.3" fill="#0ff"/><circle cx="280" cy="8.5" r="3.3" fill="#808080" stroke="#ff0" stroke-width="1" stroke-dasharray="1 1"/><circle cx="280" cy="8.5" r="2.2" fill="#909090"/><path d="M282.5 11l4.5 4.5" fill="none" stroke="#000" stroke-width="2" /><path d="M284 12l2.5 2.5" fill="none" stroke="#fff" stroke-width="0.6" /><rect x="297" y="1" width="16" height="16" fill="#008000"/><circle cx="301.5" cy="5.5" r="3" fill="#000" stroke="#ff0" stroke-width="1" stroke-dasharray="1 1.2"/><circle cx="309.5" cy="3.5" r="2.8" fill="#000" stroke="#ff0" stroke-width="1" stroke-dasharray="1 1.2"/><circle cx="308" cy="12.5" r="2.8" fill="#000" stroke="#ff0" stroke-width="1" stroke-dasharray="1 1.2"/><circle cx="302" cy="14" r="2.8" fill="#000" stroke="#ff0" stroke-width="1" stroke-dasharray="1 1.2"/><rect x="300.5" y="12" width="3" height="5" fill="#000"/><path d="M297 7h4l2 -2h6v4l-1.5 1.5v2M297 12.5h7l1 -1" fill="none" stroke="#f0f" stroke-width="1" /><rect x="322" y="5" width="7" height="7" fill="#000"/><rect x="321.5" y="4.5" width="8" height="8" fill="none" stroke="#ff0" stroke-width="1" stroke-dasharray="1 1"/><path d="M329.5 4h6M332.5 1v6" fill="none" stroke="#f00" stroke-width="2" /><rect x="345" y="5" width="7" height="7" fill="#000"/><rect x="344.5" y="4.5" width="8" height="8" fill="none" stroke="#ff0" stroke-width="1" stroke-dasharray="1 1"/><path d="M352.5 4h6M355.5 1v6" fill="none" stroke="#f00" stroke-width="2" /><rect x="351" y="8" width="8" height="8.5" fill="#fff"/><path d="M352 9.5h2M355 9.5h3M352 11.5h1M354 11.5h2M357 11.5h1M352 13.5h2M355 13.5h1M357 13.5h1M352 15.5h6" fill="none" stroke="#000" stroke-width="1" /><rect x="383.5" y="3.5" width="13" height="12" fill="none" stroke="#fff" stroke-width="1" stroke-dasharray="2 1.5"/><rect x="382.5" y="2.5" width="13" height="12" fill="none" stroke="#808080" stroke-width="1" stroke-dasharray="2 1.5"/><rect x="385" y="5" width="10" height="10" fill="#fff"/><rect x="384" y="4" width="10" height="10" fill="#808080"/><rect x="406.5" y="3.5" width="13" height="12" fill="none" stroke="#fff" stroke-width="1" stroke-dasharray="2 1.5"/><rect x="405.5" y="2.5" width="13" height="12" fill="none" stroke="#808080" stroke-width="1" stroke-dasharray="2 1.5"/><rect x="409" y="6" width="8" height="8" fill="#fff"/><rect x="408" y="5" width="8" height="8" fill="#808080"/><rect x="429.5" y="3.5" width="13" height="12" fill="none" stroke="#fff" stroke-width="1" stroke-dasharray="2 1.5"/><rect x="428.5" y="2.5" width="13" height="12" fill="none" stroke="#808080" stroke-width="1" stroke-dasharray="2 1.5"/><rect x="431" y="5" width="10" height="10" fill="#fff"/><rect x="430" y="4" width="10" height="10" fill="#808080"/><rect x="452.5" y="3.5" width="13" height="12" fill="none" stroke="#fff" stroke-width="1" stroke-dasharray="2 1.5"/><rect x="451.5" y="2.5" width="13" height="12" fill="none" stroke="#808080" stroke-width="1" stroke-dasharray="2 1.5"/><rect x="454" y="5" width="10" height="10" fill="#fff"/><rect x="453" y="4" width="10" height="10" fill="#808080"/><path d="M450 16l3 -3M466 16l-3 -3" fill="none" stroke="#808080" stroke-width="1" /><rect x="477" y="5" width="10" height="10" fill="#fff"/><rect x="476" y="4" width="10" height="10" fill="#808080"/><path d="M473 15.5h3l1 -1.5M489 15.5h-3l-1 -1.5" fill="none" stroke="#808080" stroke-width="1" /><rect x="500" y="5" width="10" height="10" fill="#fff"/><rect x="499" y="4" width="10" height="10" fill="#808080"/><rect x="497.5" y="2.5" width="13" height="13" fill="none" stroke="#808080" stroke-width="3" stroke-dasharray="1 1.5"/><rect x="499" y="4" width="10" height="10" fill="#808080"/><rect x="521.5" y="3.5" width="13" height="12" fill="none" stroke="#fff" stroke-width="1" stroke-dasharray="2 1.5"/><rect x="520.5" y="2.5" width="13" height="12" fill="none" stroke="#808080" stroke-width="1" stroke-dasharray="2 1.5"/><rect x="523" y="5" width="10" height="10" fill="#fff"/><rect x="522" y="4" width="10" height="10" fill="#808080"/><rect x="544.5" y="3.5" width="13" height="12" fill="none" stroke="#fff" stroke-width="1" stroke-dasharray="2 1.5"/><rect x="543.5" y="2.5" width="13" height="12" fill="none" stroke="#808080" stroke-width="1" stroke-dasharray="2 1.5"/><rect x="546" y="5" width="10" height="10" fill="#fff"/><rect x="545" y="4" width="10" height="10" fill="#808080"/><path d="M12.5 28.5h4l2 2v5h-6z" fill="#fff" stroke="#000" stroke-width="1" /><path d="M16.5 28.5v2h2" fill="none" stroke="#000" stroke-width="0.8" /><path d="M9 28l1.5 1.5M8 32h2M9 36l1.5 -1.5M22 28l-1.5 1.5M23 32h-2M22 36l-1.5 -1.5M15.5 25.5v1.5" fill="none" stroke="#f00" stroke-width="1" /><path d="M10 38h12.5l-3 3.5h-12.5z" fill="#000" /><rect x="13.5" y="39" width="3" height="1" fill="#0ff"/><path d="M7.5 42.5h12" fill="none" stroke="#000" stroke-width="1" stroke-dasharray="1 1"/><rect x="15" y="36" width="1" height="2" fill="#000"/><rect x="38" y="27" width="13" height="16" fill="#000"/><rect x="38.6" y="27.6" width="11.6" height="14.6" fill="#fff"/><rect x="39" y="28.1" width="2" height="1" fill="#000"/><rect x="42.5" y="28.1" width="1.5" height="1" fill="#000"/><rect x="46.5" y="28.1" width="3" height="1" fill="#000"/><rect x="39" y="30.1" width="2" height="1" fill="#000"/><rect x="42.5" y="30.1" width="4.5" height="1" fill="#000"/><rect x="48" y="30.1" width="1.5" height="1" fill="#000"/><rect x="39" y="32.1" width="2" height="1" fill="#000"/><rect x="42.5" y="32.1" width="2" height="1" fill="#000"/><rect x="46.5" y="32.1" width="3.5" height="1" fill="#000"/><rect x="39" y="34.1" width="2" height="1" fill="#000"/><rect x="42.5" y="34.1" width="2.5" height="1" fill="#000"/><rect x="46" y="34.1" width="1" height="1" fill="#000"/><rect x="48" y="34.1" width="2" height="1" fill="#000"/><rect x="39" y="36.1" width="2" height="1" fill="#000"/><rect x="42.5" y="36.1" width="7.5" height="1" fill="#000"/><rect x="39" y="38.1" width="2" height="1" fill="#000"/><rect x="42.5" y="38.1" width="0.7" height="1" fill="#000"/><rect x="44.3" y="38.1" width="4.7" height="1" fill="#000"/><rect x="39" y="40.1" width="2" height="1" fill="#000"/><rect x="42.5" y="40.1" width="2.7" height="1" fill="#000"/><rect x="46.5" y="40.1" width="3" height="1" fill="#000"/><rect x="61" y="28" width="14" height="14" fill="#000080"/><text x="62" y="34.3" font-family="Liberation Mono,monospace" font-weight="bold" font-size="7.5" fill="#ff0" textLength="11" lengthAdjust="spacingAndGlyphs">ID</text><text x="61.3" y="41" font-family="Liberation Mono,monospace" font-weight="bold" font-size="7.5" fill="#f00" textLength="13" lengthAdjust="spacingAndGlyphs">CFI</text><path d="M87 38h13l-3 3.5h-13z" fill="#000" /><rect x="85" y="31" width="5" height="7" fill="#ff0"/><rect x="90" y="31" width="5" height="7" fill="#ff0"/><rect x="95" y="30" width="3" height="7" fill="#ff0"/><rect x="85" y="30" width="5" height="1.5" fill="#0f0"/><rect x="90" y="30" width="1" height="8" fill="#0f0"/><rect x="94.5" y="29.5" width="1" height="8" fill="#0f0"/><rect x="95" y="29" width="3" height="1" fill="#0f0"/><rect x="98" y="29" width="1" height="8" fill="#0f0"/><rect x="91" y="38.5" width="2" height="1" fill="#0ff"/><path d="M84.5 42.5h12" fill="none" stroke="#000" stroke-width="1" stroke-dasharray="1 1"/><rect x="127" y="29" width="14" height="14" fill="#fff"/><rect x="126" y="28" width="14" height="14" fill="#808080"/><rect x="150" y="29" width="14" height="14" fill="#fff"/><rect x="149" y="28" width="14" height="14" fill="#808080"/><rect x="173" y="29" width="14" height="14" fill="#fff"/><rect x="172" y="28" width="14" height="14" fill="#808080"/><rect x="196" y="29" width="14" height="14" fill="#fff"/><rect x="195" y="28" width="14" height="14" fill="#808080"/><path d="M135.5 29v5M138.5 29v5M135.5 31.5h3" fill="none" stroke="#fff" stroke-width="1" /><path d="M159.5 36v4.5h3" fill="none" stroke="#fff" stroke-width="1" /><path d="M183 29.5h3l-3 3.5h3" fill="none" stroke="#fff" stroke-width="0.9" /><path d="M181.5 37v4M183.5 37.5v3.5M183.5 38q2.5 -1.5 2.5 0.5v2.5" fill="none" stroke="#fff" stroke-width="0.9" /><path d="M240.5 29.5h7l3 3v9h-10z" fill="none" stroke="#fff" stroke-width="1" transform="translate(1,1)"/><path d="M239.5 28.5h7l3 3v9h-10z" fill="#d4d0c8" stroke="#808080" stroke-width="1" /><path d="M246.5 28.5v3h3" fill="none" stroke="#808080" stroke-width="1" /><path d="M262 28h6v3l4 2.5l-4 2.5v-1h-6z" fill="#808080" /><text x="260.3" y="42.5" font-family="Liberation Sans,sans-serif" font-weight="bold" font-size="7.2" fill="#fff" textLength="15.5" lengthAdjust="spacingAndGlyphs">BRAN</text><text x="259.6" y="41.8" font-family="Liberation Sans,sans-serif" font-weight="bold" font-size="7.2" fill="#808080" textLength="15.5" lengthAdjust="spacingAndGlyphs">BRAN</text><path d="M285 42.5h4v-2h3v2h3v-2h3v2h3" fill="none" stroke="#fff" stroke-width="1" /><path d="M286 33l2 -2M292.5 31.5v-3M299 33l-2 -2M289 30l-2.5 1M296 30l2.5 1" fill="none" stroke="#fff" stroke-width="1" /><path d="M284 41.5h4v-2h3v2h3v-2h3v2h3" fill="none" stroke="#808080" stroke-width="1" /><path d="M285 32l2 -2M291.5 30.5v-3M298 32l-2 -2M288 29l-2.5 1M295 29l2.5 1" fill="none" stroke="#808080" stroke-width="1" /><circle cx="291.5" cy="35" r="2.2" fill="#808080"/><rect x="308" y="28" width="14" height="16" fill="#fff"/><rect x="307" y="27" width="14" height="16" fill="#808080"/><path d="M338.5 29l6.5 6.5h-4v7h-5v-7h-4z" fill="#fff" /><path d="M361 42.5l6.5 -6.5h-4v-7h-5v7h-4z" fill="#fff" /><path d="M337.5 28l6.5 6.5h-4v7h-5v-7h-4z" fill="#808080" /><path d="M360 41.5l6.5 -6.5h-4v-7h-5v7h-4z" fill="#808080" /><circle cx="383.5" cy="34.5" r="4.5" fill="#fff"/><path d="M386 37l5 5.5" fill="none" stroke="#fff" stroke-width="2" /><path d="M387 31h5M389.5 28.5v5" fill="none" stroke="#fff" stroke-width="1.2" /><circle cx="406.5" cy="36" r="3" fill="#fff"/><path d="M409 38l4 4" fill="none" stroke="#fff" stroke-width="1.8" /><path d="M409 32.5h5" fill="none" stroke="#fff" stroke-width="1.2" /><circle cx="382.5" cy="33.5" r="4.5" fill="#808080"/><path d="M385 36l5 5.5" fill="none" stroke="#808080" stroke-width="2" /><path d="M386 30h5M388.5 27.5v5" fill="none" stroke="#808080" stroke-width="1.2" /><circle cx="405.5" cy="35" r="3" fill="#808080"/><path d="M408 37l4 4" fill="none" stroke="#808080" stroke-width="1.8" /><path d="M408 31.5h5" fill="none" stroke="#808080" stroke-width="1.2" /><rect x="422" y="28" width="16" height="16" fill="#fff"/><rect x="421" y="27" width="16" height="16" fill="#808080"/><rect x="445" y="28" width="16" height="16" fill="#fff"/><rect x="444" y="27" width="16" height="16" fill="#808080"/><path d="M502.5 28.5h4v6l3.5 1.5v2.5l-4.5 4.5h-9.5v-4l4 -4h2.5z" fill="#fff" /><path d="M525 28.5h5v6h3l2 2v5l-2 2h-11l-2 -2v-4l2 -3h3z" fill="#fff" /><path d="M545 28.5h4v5l1.5 1.5l1.5 -1.5v-5h4v8l1 1v3.5l-2.5 2.5h-11.5v-9z" fill="#fff" /><path d="M501.5 27.5h4v6l3.5 1.5v2.5l-4.5 4.5h-9.5v-4l4 -4h2.5z" fill="#808080" /><path d="M524 27.5h5v6h3l2 2v5l-2 2h-11l-2 -2v-4l2 -3h3z" fill="#808080" /><path d="M544 27.5h4v5l1.5 1.5l1.5 -1.5v-5h4v8l1 1v3.5l-2.5 2.5h-11.5v-9z" fill="#808080" /><path d="M591 6l8.5 4l-8.5 4z" fill="#0f0" /><path d="M591 6v8" fill="none" stroke="#40c000" stroke-width="1" /><circle cx="619.5" cy="10" r="6.8" fill="#fff"/><circle cx="619" cy="9.5" r="6.8" fill="#808080"/><rect x="614" y="8.5" width="10" height="2.5" fill="#fff"/><rect x="641" y="2" width="16" height="14" rx="3" fill="#008000" stroke="#006000" stroke-width="1"/><path d="M643 12.5v-6h2.5v3.5h2v-3.5h2.5v3.5h2v-3.5h2v6" fill="none" stroke="#30c030" stroke-width="1.3" /><rect x="664" y="1" width="16" height="16" fill="#d4d0c8"/><rect x="664.5" y="1.5" width="15" height="15" fill="#e8e6e0" stroke="#fff"/><path d="M664.5 16.5h15v-15" fill="none" stroke="#808080" stroke-width="1" /><rect x="667" y="4" width="10" height="10" fill="#8a8a8a"/><path d="M671.5 5.5h2.5v5q0 2 -2 2q-2 0 -2 -2" fill="none" stroke="#f00" stroke-width="1.7" /></g>
</svg>
<div class="a" style="left:429px;top:197.5px;font-weight:bold;font-size:20px;line-height:1;color:#f00;transform:scaleX(.935);transform-origin:0 0">Click</div>
<svg width="956" height="618" viewBox="0 0 956 618"><rect x="27.5" y="18.5" width="32" height="30" fill="none" stroke="#f00" stroke-width="3"/>
<rect x="81.5" y="171.5" width="346" height="30.6" fill="none" stroke="#f00" stroke-width="3"/>
<path d="M49 51L109.5 171M45 72L49 51L71 60.5" fill="none" stroke="#f00" stroke-width="4.5" stroke-linecap="round" stroke-linejoin="round"/></svg>
</body></html>
